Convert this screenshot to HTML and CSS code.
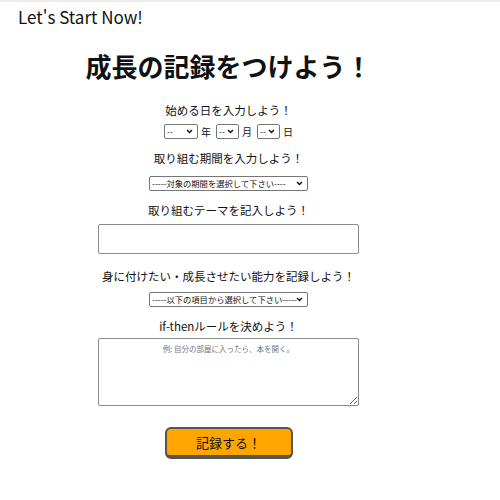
FILE: index.html
```html
<!DOCTYPE html>
<html lang="ja">
<head>
<meta charset="utf-8">
<title>Let's Start Now!</title>
<link rel="stylesheet" href="styles.css">
</head>
<body>
<header class="topbar">
  <div class="brand">Let's Start Now!</div>
</header>
<main class="form">
  <h1 class="title">成長の記録をつけよう！</h1>
  <p class="label label-first">始める日を入力しよう！</p>
  <div class="date-row">
    <select class="sel sel-year"><option>--</option></select><span class="unit">年</span>
    <select class="sel sel-small"><option>--</option></select><span class="unit">月</span>
    <select class="sel sel-small"><option>--</option></select><span class="unit">日</span>
  </div>
  <p class="label">取り組む期間を入力しよう！</p>
  <select class="sel sel-wide sel-period"><option>-----対象の期間を選択して下さい----</option></select>
  <p class="label">取り組むテーマを記入しよう！</p>
  <input class="text-input" type="text">
  <p class="label label-gap">身に付けたい・成長させたい能力を記録しよう！</p>
  <select class="sel sel-wide sel-skill"><option>-----以下の項目から選択して下さい-----</option></select>
  <p class="label">if-thenルールを決めよう！</p>
  <textarea class="area" placeholder="例: 自分の部屋に入ったら、本を開く。"></textarea>
  <button class="submit" type="button">記録する！</button>
</main>
</body>
</html>
```
FILE: styles.css
```css
html, body {
  margin: 0;
  padding: 0;
  background: #fff;
}
body {
  font-family: "Noto Sans CJK JP", "Noto Sans", sans-serif;
  color: #111;
  border-top: 2px solid #ececec;
}
.topbar {
  padding: 4px 0 0 18px;
}
.brand {
  font-size: 17px;
  line-height: 22px;
}
.form {
  width: 441px;
  margin-left: 8px;
  display: flex;
  flex-direction: column;
  align-items: center;
  text-align: center;
}
.title {
  font-size: 26px;
  font-weight: 700;
  margin: 21px 0 0;
  line-height: 34px;
}
.label {
  font-size: 11.5px;
  line-height: 18px;
  margin: 10px 0 0;
}
.label-first { margin-top: 18px; }
.date-row {
  display: flex;
  align-items: center;
  margin: 5px 0 0;
  height: 15px;
}
.unit {
  font-size: 10px;
  margin: 0 5px 0 3px;
}
.unit:last-child { margin-right: 0; }
.sel {
  appearance: none;
  -webkit-appearance: none;
  font-family: "Noto Sans CJK JP", sans-serif;
  font-size: 8.3px;
  height: 15px;
  line-height: 13px;
  padding: 0 10px 0 2px;
  border: 1px solid #767676;
  border-radius: 2px;
  color: #111;
  background-color: #fff;
  background-image: url("data:image/svg+xml;utf8,<svg xmlns='http://www.w3.org/2000/svg' width='7' height='5' viewBox='0 0 7 5'><path d='M1 1l2.5 2.5L6 1' fill='none' stroke='%23111' stroke-width='1.4'/></svg>");
  background-repeat: no-repeat;
  background-position: right 4px center;
  box-sizing: border-box;
}
.sel-year { width: 34px; }
.sel-small { width: 23px; }
.sel-wide { width: 159px; }
.sel-period { margin-top: 9px; }
.sel-skill { margin-top: 7px; }
.text-input {
  width: 261px;
  height: 30px;
  box-sizing: border-box;
  border: 1px solid #8a8a8a;
  border-radius: 2px;
  margin-top: 5px;
}
.label-gap { margin-top: 13px; }
.area {
  width: 261px;
  height: 68px;
  box-sizing: border-box;
  border: 1px solid #8a8a8a;
  border-radius: 2px;
  margin-top: 3px;
  font-family: "Noto Sans CJK JP", sans-serif;
  font-size: 7.5px;
  text-align: center;
  padding: 4px 3px;
  resize: vertical;
}
.area::placeholder { color: #777; }
.submit {
  margin-top: 21px;
  width: 128px;
  height: 32px;
  background: #ffa500;
  border: 2px solid #555;
  border-bottom-width: 4px;
  border-radius: 6px;
  font-family: "Noto Sans CJK JP", sans-serif;
  font-size: 13px;
  color: #111;
  padding: 0;
}
```
